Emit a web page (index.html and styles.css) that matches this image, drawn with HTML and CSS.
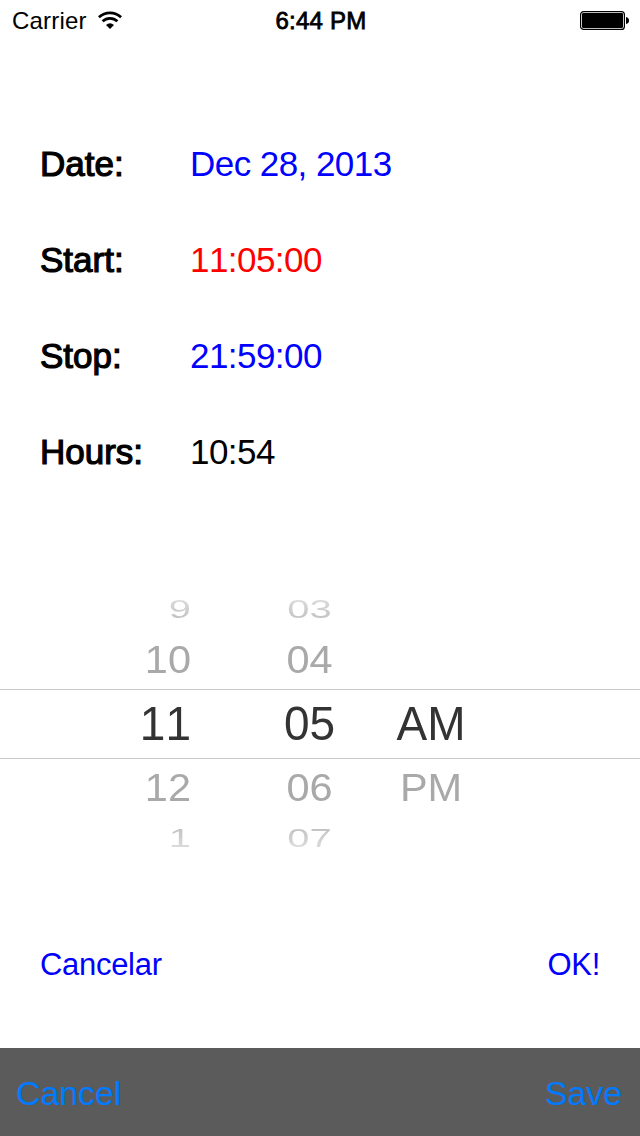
FILE: index.html
```html
<!DOCTYPE html>
<html lang="en">
<head>
    <meta charset="UTF-8">
    <meta name="viewport" content="width=device-width, initial-scale=1.0">
    <title>Edit Time Entry</title>
    <link rel="stylesheet" href="styles.css">
</head>
<body>
    <!-- Status bar -->
    <div class="status-bar">
        <div class="carrier">
            <span>Carrier</span>
            <svg class="wifi" width="24" height="18" viewBox="0 0 24 18">
                <path d="M0.9 6.3 A16 16 0 0 1 23.1 6.3" fill="none" stroke="#000" stroke-width="2.8"/>
                <path d="M4.6 10.3 A10.6 10.6 0 0 1 19.4 10.3" fill="none" stroke="#000" stroke-width="2.7"/>
                <path d="M8 13.9 Q12 10.8 16 13.9 L12 18 Z"/>
            </svg>
        </div>
        <span class="clock">6:44 PM</span>
        <svg class="battery" width="50" height="20" viewBox="0 0 50 20">
            <rect x="0.6" y="0.6" width="43.8" height="17.8" rx="3" fill="none" stroke="#000" stroke-width="1.2"/>
            <rect x="2" y="2" width="41" height="15" rx="1.2"/>
            <path d="M46 6 Q49 6.5 49 9.5 Q49 12.5 46 13 Z"/>
        </svg>
    </div>

    <!-- Entry details -->
    <div class="details">
        <div class="row"><span class="label">Date:</span><span class="value blue">Dec 28, 2013</span></div>
        <div class="row"><span class="label">Start:</span><span class="value red">11:05:00</span></div>
        <div class="row"><span class="label">Stop:</span><span class="value blue">21:59:00</span></div>
        <div class="row"><span class="label">Hours:</span><span class="value">10:54</span></div>
    </div>

    <!-- Time picker -->
    <div class="picker">
        <div class="picker-row far top"><span>9</span><span>03</span></div>
        <div class="picker-row near top"><span>10</span><span>04</span></div>
        <div class="picker-row selected"><span>11</span><span>05</span><span>AM</span></div>
        <div class="picker-row near bottom"><span>12</span><span>06</span><span>PM</span></div>
        <div class="picker-row far bottom"><span>1</span><span>07</span></div>
    </div>

    <div class="actions">
        <span>Cancelar</span>
        <span>OK!</span>
    </div>

    <div class="toolbar">
        <span>Cancel</span>
        <span>Save</span>
    </div>
</body>
</html>
```

FILE: styles.css
```css
* {
    box-sizing: border-box;
}
body {
    margin: 0;
    height: 1136px;
    display: flex;
    flex-direction: column;
    overflow: hidden;
    background-color: #fff;
    color: #000;
    font-family: "Liberation Sans", Arial, sans-serif;
    font-kerning: none;
}
.status-bar {
    height: 40px;
    padding: 1px 10px 0 12px;
    display: grid;
    grid-template-columns: 1fr auto 1fr;
    align-items: center;
    font-size: 24px;
}
.carrier {
    display: flex;
    align-items: center;
    gap: 11px;
}
.carrier span {
    letter-spacing: 0.2px;
}
.wifi {
    margin-top: -2px;
}
.clock {
    letter-spacing: 0.25px;
    -webkit-text-stroke: 0.8px #000;
}
.battery {
    justify-self: end;
}
.details {
    margin-top: 76px;
}
.row {
    height: 96px;
    padding-left: 40px;
    display: flex;
    align-items: center;
    font-size: 35px;
}
.label {
    width: 150px;
    letter-spacing: 0;
    -webkit-text-stroke: 1.2px #000;
}
.value {
    letter-spacing: -0.55px;
}
.blue {
    color: #0000ff;
}
.red {
    color: #ff0000;
}
.picker {
    margin-top: 84px;
}
.picker-row {
    display: grid;
    grid-template-columns: 191px 237px 6px;
    align-items: center;
    justify-items: center;
    line-height: 1;
    white-space: nowrap;
}
.picker-row span:first-child {
    justify-self: end;
}
.selected {
    height: 70px;
    padding-bottom: 2px;
    border-top: 1px solid #c8c8c8;
    border-bottom: 1px solid #c8c8c8;
    color: #333;
    font-size: 46px;
}
.selected span {
    transform: scaleY(1.04);
}
.near {
    height: 55px;
    color: #a9a9a9;
    font-size: 41.5px;
}
.near span {
    transform: scaleY(0.93);
}
.near.top {
    padding-bottom: 4px;
}
.near.bottom {
    padding-top: 2px;
}
.far {
    height: 50px;
    font-size: 40px;
}
.far span {
    color: transparent;
    background-clip: text;
    -webkit-background-clip: text;
    transform: scaleY(0.65);
}
.far.top span {
    background-image: linear-gradient(#e0e0e0, #bebebe);
}
.far.bottom {
    padding-bottom: 2px;
}
.far.bottom span {
    background-image: linear-gradient(#bebebe, #e0e0e0);
}
.actions {
    margin-top: 71px;
    padding: 0 40px;
    height: 60px;
    display: flex;
    justify-content: space-between;
    align-items: center;
    font-size: 31px;
    letter-spacing: -0.3px;
    color: #0000ff;
}
.toolbar {
    margin-top: auto;
    height: 88px;
    padding: 2px 18px 0 16px;
    display: flex;
    justify-content: space-between;
    align-items: center;
    background-color: #5b5b5b;
    color: #007aff;
    font-size: 34px;
    letter-spacing: -0.1px;
}
```
